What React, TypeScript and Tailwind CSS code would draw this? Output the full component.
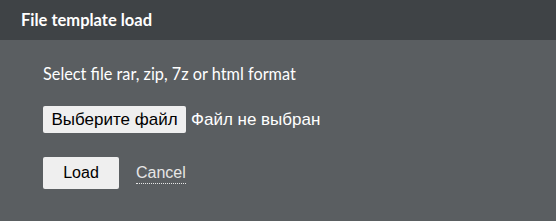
export default function App() {
  return (
    <div className="w-[556px] h-[221px] flex flex-col bg-[#5a5e61] font-['Lato',sans-serif]">
      <div className="h-[40px] shrink-0 bg-[#3f4346] flex items-center px-[21px]">
        <h1 className="text-[16.5px] font-bold text-white">File template load</h1>
      </div>
      <div className="flex flex-col px-[43px] pt-[24px]">
        <p className="text-[16.3px] text-white leading-[20px]">Select file rar, zip, 7z or html format</p>
        <div className="mt-[22px] flex items-center gap-[5px] font-['Liberation_Sans',sans-serif] text-[17px]">
          <button className="h-[27px] w-[143px] rounded-[2px] bg-[#efefef] text-black">Выберите файл</button>
          <span className="text-white">Файл не выбран</span>
        </div>
        <div className="mt-[24px] flex items-center gap-[17px] font-['Liberation_Sans',sans-serif]">
          <button className="h-[32px] w-[76px] rounded-[2px] bg-[#efefef] text-[16px] text-black">Load</button>
          <a className="text-[16px] text-[#e6e6e6] border-b border-dotted border-[#e6e6e6] leading-[20px]">Cancel</a>
        </div>
      </div>
    </div>
  );
}
